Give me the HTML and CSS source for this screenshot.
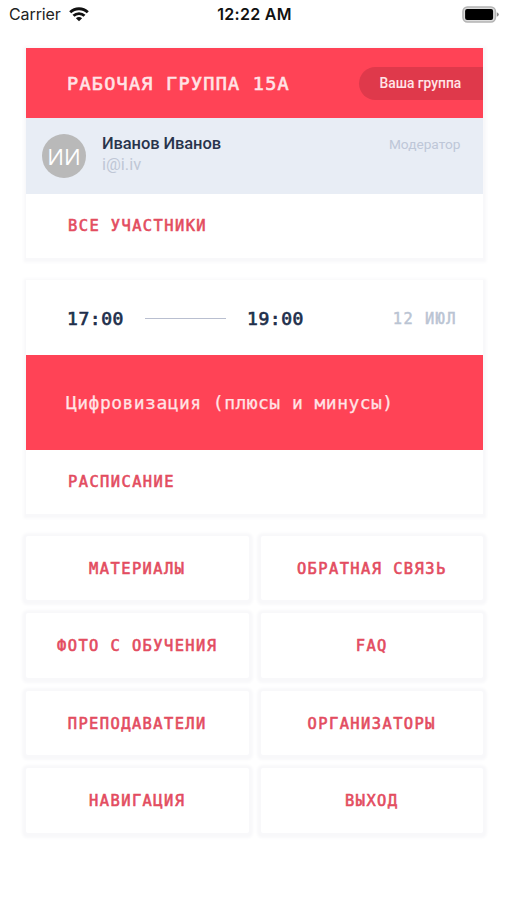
FILE: index.html
```html
<!DOCTYPE html>
<html lang="ru">
<head>
<meta charset="utf-8">
<title>Рабочая группа</title>
<link rel="stylesheet" href="styles.css">
</head>
<body>
<header class="status">
  <div class="carrier"><span>Carrier</span>
    <svg class="wifi" width="20" height="15" viewBox="0 0 20 15" fill="none" stroke="#111" stroke-width="2.9"><path d="M1.2 5.2C6.1.5 13.9.5 18.8 5.2"/><path d="M4.5 8.8C7.6 5.9 12.4 5.9 15.5 8.8"/><path d="M10 14.3 6.9 11.3C8.6 9.7 11.4 9.7 13.1 11.3Z" fill="#111" stroke="none"/></svg>
  </div>
  <div class="clock">12:22 AM</div>
  <svg class="battery" width="37" height="17" viewBox="0 0 37 17"><rect x="1" y="1" width="32.4" height="15" rx="4.4" fill="#ddd" stroke="#b4b4b4" stroke-width="1.6"/><rect x="3.1" y="3.1" width="28" height="10.8" rx="2" fill="#000"/><path d="M34.8 6.3Q36.8 7 36.8 8.5T34.8 10.7Z" fill="#888"/></svg>
</header>
<main class="content">
  <section class="card">
    <div class="group-head"><h1 class="group-title">РАБОЧАЯ ГРУППА 15А</h1><span class="tag">Ваша группа</span></div>
    <div class="member">
      <div class="avatar">ИИ</div>
      <div class="person"><div class="name">Иванов Иванов</div><div class="mail">i@i.iv</div></div>
      <div class="role">Модератор</div>
    </div>
    <a class="link">ВСЕ УЧАСТНИКИ</a>
  </section>
  <section class="card">
    <div class="times"><span class="time">17:00</span><span class="line"></span><span class="time">19:00</span><span class="date">12 ИЮЛ</span></div>
    <div class="topic">Цифровизация (плюсы и минусы)</div>
    <a class="link">РАСПИСАНИЕ</a>
  </section>
  <nav class="menu">
    <a class="tile">МАТЕРИАЛЫ</a><a class="tile">ОБРАТНАЯ СВЯЗЬ</a>
    <a class="tile">ФОТО С ОБУЧЕНИЯ</a><a class="tile">FAQ</a>
    <a class="tile">ПРЕПОДАВАТЕЛИ</a><a class="tile">ОРГАНИЗАТОРЫ</a>
    <a class="tile">НАВИГАЦИЯ</a><a class="tile">ВЫХОД</a>
  </nav>
</main>
</body>
</html>
```
FILE: styles.css
```css
* { box-sizing: border-box; }
body { margin: 0; background: #fff; font-family: Roboto, "Liberation Sans", sans-serif; }
.status { height: 29px; padding: 0 8px 0 9px; display: grid; grid-template-columns: 1fr auto 1fr; align-items: center; font: 16px/29px Inter, sans-serif; color: #222; }
.carrier { display: flex; align-items: center; gap: 8px; letter-spacing: -.1px; }
.clock { padding-left: 1px; font-weight: 600; color: #111; letter-spacing: .3px; }
.battery { justify-self: end; }
.content { padding: 19px 24px 24px 26px; }
.card { width: 456.5px; background: #fff; box-shadow: 0 1px 3px 3.5px #f8f8fa; }
.card + .card { margin-top: 22px; }
.group-head { height: 70px; padding-left: 41px; display: flex; align-items: center; justify-content: space-between; background: #ff4356; }
.group-title { margin: 0; padding-top: 1px; font: 18.5px/24px "DejaVu Sans Mono", monospace; letter-spacing: 1.25px; color: #ffe4e6; -webkit-text-stroke: .6px #ffe4e6; }
.tag { width: 124px; height: 33px; padding-left: 21px; border-radius: 17px 0 0 17px; background: #df394b; color: #ffe4e7; font-size: 13.8px; font-weight: 500; line-height: 33px; }
.member { height: 75.5px; padding: 16px 22px 0 16px; display: flex; background: #e8edf5; }
.avatar { width: 44px; height: 44px; border-radius: 50%; background: #b9b9b9; color: #fff; font: 22px/44px "Open Sans", sans-serif; text-align: center; }
.person { margin-left: 16px; flex: 1; }
.name { font-size: 16.5px; font-weight: 500; line-height: 20px; letter-spacing: -.1px; color: #28344c; }
.mail { font-size: 16.5px; line-height: 21px; color: #bfc7d6; }
.role { font-size: 13.7px; line-height: 21px; color: #bec7d8; }
.link { height: 64px; padding: 1px 0 0 42px; display: flex; align-items: center; }
.link, .tile { font: 15.4px/20px "DejaVu Sans Mono", monospace; letter-spacing: 1.43px; color: #e34c60; -webkit-text-stroke: .6px #e34c60; }
.times { height: 75px; padding: 3px 25.5px 0 41px; display: flex; align-items: center; font: 18px/24px "DejaVu Sans Mono", monospace; letter-spacing: .56px; color: #202e4b; -webkit-text-stroke: .7px #202e4b; }
.line { width: 81px; height: 1.5px; margin: 0 21px; background: #b9bfd0; }
.date { margin-left: auto; font-size: 15.4px; letter-spacing: 1.43px; color: #bac4d3; -webkit-text-stroke: .5px #bac4d3; }
.topic { height: 95px; padding: 2px 0 0 40px; display: flex; align-items: center; background: #ff4356; color: #ffe4e6; font: 18px/24px "DejaVu Sans Mono", monospace; letter-spacing: .46px; -webkit-text-stroke: .25px #ffe4e6; }
.menu { margin-top: 22px; width: 457px; display: grid; grid-template-columns: 1fr 1fr; gap: 13px 12px; }
.tile { height: 64.5px; display: flex; align-items: center; justify-content: center; padding-top: 2px; border-radius: 2px; background: #fff; box-shadow: 0 1px 3px 3.5px #f8f8fa; }
```
